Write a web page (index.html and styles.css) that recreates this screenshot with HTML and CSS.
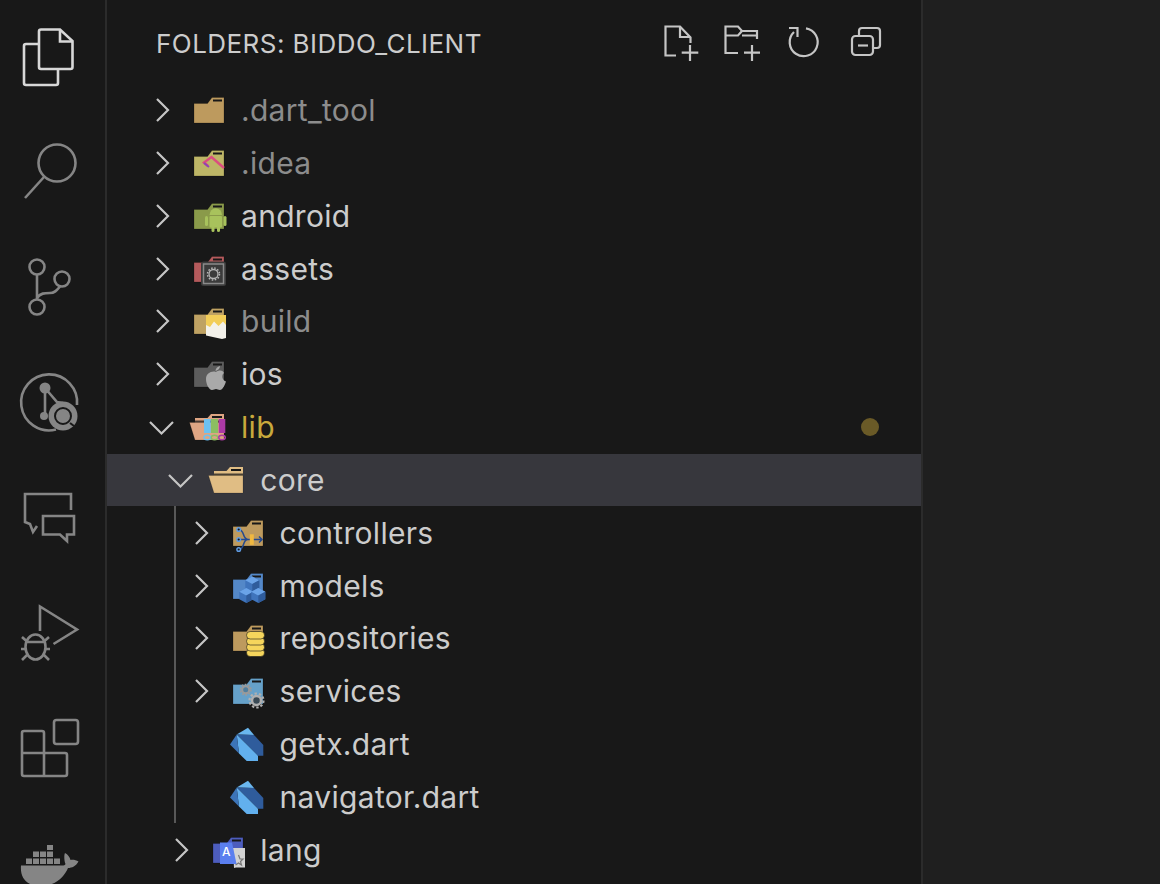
FILE: index.html
```html
<!DOCTYPE html>
<html lang="en">
<head>
    <meta charset="UTF-8">
    <title>Explorer - biddo_client</title>
    <link rel="stylesheet" href="styles.css">
</head>
<body>
    <svg class="icon-defs" aria-hidden="true">
        <defs>
            <g id="folder">
                <path d="M0 12.5H13.5L18 6.5H30V32H0Z" stroke="#000" stroke-opacity=".2"/>
                <rect x="19" y="8.5" width="9" height="2" fill="#181818"/>
            </g>
            <g id="folder-open">
                <path d="M1 10H13.5L17 6H30V32H1Z"/>
                <rect x="18" y="8" width="10" height="2" fill="#181818"/>
                <path d="M1 12.5H30V15H1Z" fill="#181818" opacity=".75"/>
                <path d="M-4.5 14.5H30V32H1Z" stroke="#000" stroke-opacity=".15"/>
            </g>
            <g id="chevron-right">
                <path d="M11 5L22 16L11 27" fill="none" stroke="#c5c5c5" stroke-width="2.2"/>
            </g>
            <g id="chevron-down">
                <path d="M4 11L15.5 22.5L27 11" fill="none" stroke="#c5c5c5" stroke-width="2.2"/>
            </g>
            <g id="dart">
                <path d="M3.7 9.4L15 2.7L21 10Z" fill="#6ab7ef"/>
                <path d="M3.7 9.4L21 10L30.3 20V30.7H25Z" fill="#2f5c9c"/>
                <path d="M3.7 9.4L25 30.7V36H13.7L6 28.4Z" fill="#62b0ee"/>
                <path d="M3.7 9.4L-3 19.4L6 28.4Z" fill="#3c74b8"/>
            </g>
            <g id="cube">
                <path d="M0-7.500L7-3.800V3.800L0 7.500L-7 3.800V-3.800Z" fill="#3f74bc"/>
                <path d="M0-7.500L7-3.800L0 0L-7-3.800Z" fill="#6aa3e8"/>
                <path d="M0 0L7-3.800V3.800L0 7.500Z" fill="#2f5c9c"/>
            </g>
            <linearGradient id="idea-stroke" x1="0" y1="1" x2="1" y2="0">
                <stop offset="0" stop-color="#fbe04a"/>
                <stop offset="1" stop-color="#ee7b3c"/>
            </linearGradient>
        </defs>
    </svg>

    <div class="workbench">
        <nav class="activity-bar">
            <svg class="activity-icon active" viewBox="0 0 105 115">
                <path d="M41 29.500H60L72.500 41V67A2 2 0 0 1 70.500 69H41A2 2 0 0 1 39 67V31.500A2 2 0 0 1 41 29.500Z"/>
                <path d="M60 30V41.500H72"/>
                <path d="M39 44H26A2 2 0 0 0 24 46V83A2 2 0 0 0 26 85H56A2 2 0 0 0 58 83V70"/>
            </svg>
            <svg class="activity-icon" viewBox="0 0 105 115">
                <circle cx="57" cy="48" r="18.500"/>
                <path d="M44 62L25 83"/>
            </svg>
            <svg class="activity-icon" viewBox="0 0 105 115">
                <circle cx="37" cy="37" r="7.500"/>
                <circle cx="62" cy="49" r="7.500"/>
                <circle cx="37" cy="77" r="7.500"/>
                <path d="M37 44.500V69.500"/>
                <path d="M37 68C40 63 45 63 50 63C55 63 57 60 60 56.500"/>
            </svg>
            <svg class="activity-icon" viewBox="0 0 105 115">
                <path d="M56 84.500A28 28 0 1 1 77 60"/>
                <circle cx="45" cy="43" r="5.500" class="solid"/>
                <circle cx="44" cy="71" r="4" class="solid"/>
                <path d="M45 43V71M45 43L57 57L63 58"/>
                <circle cx="63" cy="71" r="14.500" class="solid"/>
                <circle cx="63" cy="71" r="8" class="ring"/>
                <circle cx="63" cy="71" r="5" class="solid"/>
                <path d="M70 78L74 81" class="notch"/>
            </svg>
            <svg class="activity-icon" viewBox="0 0 105 115">
                <path d="M71 50V34H25V62L30 64L33 72L37 66"/>
                <path d="M43 56H74V74.500H67V81L60 74.500H43Z"/>
            </svg>
            <svg class="activity-icon" viewBox="0 0 105 115">
                <path d="M40 56V31.500L77 54.500L53.500 69"/>
                <ellipse cx="35.500" cy="72" rx="10" ry="12.500"/>
                <path d="M26 67H45M22 62L27 66.500M49 62L44 66.500M21 74H26M45 74H50M22 85L27 80M49 85L44 80"/>
            </svg>
            <svg class="activity-icon" viewBox="0 0 105 115">
                <rect x="54" y="30" width="24" height="24" rx="2.500"/>
                <path d="M44 86V43A2 2 0 0 0 42 41H24A2 2 0 0 0 22 43V84A2 2 0 0 0 24 86H65A2 2 0 0 0 67 84V65A2 2 0 0 0 65 63H22"/>
            </svg>
            <svg class="activity-icon" viewBox="0 0 105 115">
                <path class="solid" d="M47 40H53V45H47ZM33 46.500H39V52H33ZM40 46.500H46V52H40ZM47 46.500H53V52H47ZM26 53.500H32V59H26ZM33 53.500H39V59H33ZM40 53.500H46V59H40ZM47 53.500H53V59H47ZM54 53.500H60V59H54Z"/>
                <path class="solid" d="M21 60.500H62C64 60.500 65 60 65.500 59C64 55 64 50 65 48C67 49 70 52 70.500 55C73 54.500 76 55 78.500 56.500C76 61 72 63 68 63C64 72 56 81 40 81C26 81 20 72 21 60.500Z"/>
            </svg>
        </nav>

        <aside class="explorer">
            <header class="explorer-header">
                <h2 class="explorer-title">FOLDERS: BIDDO_CLIENT</h2>
                <div class="explorer-actions">
                    <svg class="action-icon" viewBox="0 0 40 40">
                        <path d="M16 33.500H5.500V4.500H20L30.500 15.500V21"/>
                        <path d="M20 4.500V15H30.500"/>
                        <path d="M21.700 30.700H38.300M30 23V39"/>
                    </svg>
                    <svg class="action-icon" viewBox="0 0 40 40">
                        <path d="M16 31H3.500V4.500H16L20 9H35V17"/>
                        <path d="M3.500 13.500H16L20 9M20 13.500H35"/>
                        <path d="M22 30.700H38M30 23V39"/>
                    </svg>
                    <svg class="action-icon" viewBox="0 0 40 40">
                        <path d="M10 10A14 14 0 1 0 22 6.300"/>
                        <path d="M5 6H13.500V15"/>
                    </svg>
                    <svg class="action-icon" viewBox="0 0 40 40">
                        <path d="M13 14V9A3 3 0 0 1 16 6H31A3 3 0 0 1 34 9V23A3 3 0 0 1 31 26H27"/>
                        <rect x="6" y="14" width="21" height="19" rx="3.500"/>
                        <path d="M12 23.500H22"/>
                    </svg>
                </div>
            </header>

            <ul class="tree">
                <li class="tree-row dim depth-0">
                    <svg class="twistie" viewBox="0 0 32 32"><use href="#chevron-right"/></svg>
                    <svg class="file-icon" viewBox="0 0 32 38"><use href="#folder" fill="#bd9a5e"/></svg>
                    <span class="label">.dart_tool</span>
                </li>
                <li class="tree-row dim depth-0">
                    <svg class="twistie" viewBox="0 0 32 32"><use href="#chevron-right"/></svg>
                    <svg class="file-icon" viewBox="0 0 32 38">
                        <use href="#folder" fill="#bdb566"/>
                        <path d="M14 22L10 18.500L17.500 13L30 24" fill="none" stroke="#db4d7f" stroke-width="2.500"/>
                        <path d="M30 24L15 34" fill="none" stroke="url(#idea-stroke)" stroke-width="3"/>
                        <path d="M10 19L15 23" stroke="#8d45b5" stroke-width="2"/>
                    </svg>
                    <span class="label">.idea</span>
                </li>
                <li class="tree-row depth-0">
                    <svg class="twistie" viewBox="0 0 32 32"><use href="#chevron-right"/></svg>
                    <svg class="file-icon" viewBox="0 0 32 38">
                        <use href="#folder" fill="#8a9a4a"/>
                        <g fill="#a8c25c">
                            <path d="M15.500 18A6 6.500 0 0 1 28 18Z"/>
                            <rect x="15.500" y="19" width="12.500" height="11.500" rx="1"/>
                            <rect x="11" y="19" width="3" height="10" rx="1.500"/>
                            <rect x="29.500" y="19" width="3" height="10" rx="1.500"/>
                            <rect x="17.500" y="29" width="3" height="6" rx="1.500"/>
                            <rect x="23" y="29" width="3" height="6" rx="1.500"/>
                        </g>
                    </svg>
                    <span class="label">android</span>
                </li>
                <li class="tree-row depth-0">
                    <svg class="twistie" viewBox="0 0 32 32"><use href="#chevron-right"/></svg>
                    <svg class="file-icon" viewBox="0 0 32 38">
                        <use href="#folder" fill="#b45a5c"/>
                        <rect x="7" y="11.500" width="25" height="24.500" rx="2.500" fill="#3b3b3b"/>
                        <rect x="9.500" y="14" width="20" height="19.500" fill="none" stroke="#8a8a8a" stroke-width="1.500"/>
                        <circle cx="19.500" cy="24" r="4.500" fill="none" stroke="#b5b5b5" stroke-width="1.300"/>
                        <circle cx="19.500" cy="24" r="6" fill="none" stroke="#b5b5b5" stroke-width="1.500" stroke-dasharray="1.600 1.540"/>
                    </svg>
                    <span class="label">assets</span>
                </li>
                <li class="tree-row dim depth-0">
                    <svg class="twistie" viewBox="0 0 32 32"><use href="#chevron-right"/></svg>
                    <svg class="file-icon" viewBox="0 0 32 38">
                        <use href="#folder" fill="#bfa263"/>
                        <path d="M12 13H32V36L28 37L12 33.500Z" fill="#f3f1ea"/>
                        <path d="M12 13H32V23L29 19.500L24.500 24L20 19.500L16 25L12 23Z" fill="#f2cd58"/>
                    </svg>
                    <span class="label">build</span>
                </li>
                <li class="tree-row depth-0">
                    <svg class="twistie" viewBox="0 0 32 32"><use href="#chevron-right"/></svg>
                    <svg class="file-icon" viewBox="0 0 32 38">
                        <use href="#folder" fill="#5c5c5c"/>
                        <path d="M22 17C24 15.500 27 15 29 16.500L30 18C27.500 19.500 27.500 25 32 26.500C31 30 28.500 35 26 35C24 35 23.500 34 22 34C20.500 34 20 35 18 35C15 35 12 29 12 24C12 18.500 17.500 15.500 22 17Z" fill="#a9a9a9"/>
                        <path d="M21.500 16C21.500 13.500 23.500 11.500 26 11C26 13.500 24 15.500 21.500 16Z" fill="#a9a9a9"/>
                    </svg>
                    <span class="label">ios</span>
                </li>
                <li class="tree-row modified depth-0">
                    <svg class="twistie" viewBox="0 0 32 32"><use href="#chevron-down"/></svg>
                    <svg class="file-icon" viewBox="0 0 32 38">
                        <use href="#folder-open" fill="#dea583"/>
                        <rect x="10" y="11" width="6.700" height="14" fill="#6cc1f2"/>
                        <rect x="17" y="11" width="7" height="14" fill="#8cbe62"/>
                        <rect x="24.700" y="11" width="6.600" height="14" fill="#ac3aa6"/>
                        <ellipse cx="13.300" cy="29.500" rx="3.300" ry="2.300" fill="none" stroke="#6cc1f2" stroke-width="1.500"/>
                        <ellipse cx="20.500" cy="29.500" rx="3.300" ry="2.300" fill="none" stroke="#8cbe62" stroke-width="1.500"/>
                        <ellipse cx="28" cy="29.500" rx="3.300" ry="2.300" fill="none" stroke="#ac3aa6" stroke-width="1.500"/>
                    </svg>
                    <span class="label">lib</span>
                    <span class="status-dot"></span>
                </li>
                <li class="tree-row selected depth-1">
                    <svg class="twistie" viewBox="0 0 32 32"><use href="#chevron-down"/></svg>
                    <svg class="file-icon" viewBox="0 0 32 38"><use href="#folder-open" fill="#e0bd84"/></svg>
                    <span class="label">core</span>
                </li>
                <li>
                    <ul class="tree-group">
                        <li class="tree-row depth-2">
                            <svg class="twistie" viewBox="0 0 32 32"><use href="#chevron-right"/></svg>
                            <svg class="file-icon" viewBox="0 0 32 38">
                                <use href="#folder" fill="#bd9a5e"/>
                                <path d="M5.700 15.500C12 15.500 9 25.500 15 25.500H28.500M5.700 25.500H15M5.700 35.500C12 35.500 9 25.500 15 25.500M26 22.500L29 25.500L26 28.500" fill="none" stroke="#24498f" stroke-width="1.500"/>
                                <rect x="16.800" y="20.300" width="4" height="10.500" fill="#f0b840"/>
                                <g fill="#181818" stroke="#5f9ae0" stroke-width="1.500">
                                    <circle cx="5.700" cy="15.500" r="1.800"/>
                                    <circle cx="5.700" cy="25.500" r="1.800"/>
                                    <circle cx="5.700" cy="35.500" r="1.800"/>
                                </g>
                            </svg>
                            <span class="label">controllers</span>
                        </li>
                        <li class="tree-row depth-2">
                            <svg class="twistie" viewBox="0 0 32 32"><use href="#chevron-right"/></svg>
                            <svg class="file-icon" viewBox="0 0 32 38">
                                <use href="#folder" fill="#5488c8"/>
                                <use href="#cube" x="19.300" y="17"/>
                                <use href="#cube" x="13.300" y="28.500"/>
                                <use href="#cube" x="25.300" y="28.500"/>
                            </svg>
                            <span class="label">models</span>
                        </li>
                        <li class="tree-row depth-2">
                            <svg class="twistie" viewBox="0 0 32 32"><use href="#chevron-right"/></svg>
                            <svg class="file-icon" viewBox="0 0 32 38">
                                <use href="#folder" fill="#bd9a5e"/>
                                <g fill="#f5d55c" stroke="#181818" stroke-width=".6">
                                    <rect x="13.500" y="30" width="18" height="7.500" rx="3.700"/>
                                    <rect x="13.500" y="24.500" width="18" height="7.500" rx="3.700"/>
                                    <rect x="13.500" y="18.500" width="18" height="7.500" rx="3.700"/>
                                    <rect x="13.500" y="12.500" width="18" height="7.500" rx="3.700"/>
                                </g>
                            </svg>
                            <span class="label">repositories</span>
                        </li>
                        <li class="tree-row depth-2">
                            <svg class="twistie" viewBox="0 0 32 32"><use href="#chevron-right"/></svg>
                            <svg class="file-icon" viewBox="0 0 32 38">
                                <use href="#folder" fill="#66a1c9"/>
                                <g fill="#4f7f9f" stroke="#9a9a9a">
                                    <circle cx="12.700" cy="17.700" r="3.500" stroke-width="2"/>
                                    <circle cx="12.700" cy="17.700" r="5.200" fill="none" stroke-width="1.600" stroke-dasharray="1.800 1.470"/>
                                </g>
                                <g fill="#3a4a55" stroke="#b0b0b0">
                                    <circle cx="23.500" cy="28.500" r="4.500" stroke-width="2.500"/>
                                    <circle cx="23.500" cy="28.500" r="7" fill="none" stroke-width="2.200" stroke-dasharray="2.400 2.000"/>
                                </g>
                            </svg>
                            <span class="label">services</span>
                        </li>
                        <li class="tree-row depth-2">
                            <span class="twistie"></span>
                            <svg class="file-icon" viewBox="0 0 32 38"><use href="#dart"/></svg>
                            <span class="label">getx.dart</span>
                        </li>
                        <li class="tree-row depth-2">
                            <span class="twistie"></span>
                            <svg class="file-icon" viewBox="0 0 32 38"><use href="#dart"/></svg>
                            <span class="label">navigator.dart</span>
                        </li>
                    </ul>
                </li>
                <li class="tree-row depth-1">
                    <svg class="twistie" viewBox="0 0 32 32"><use href="#chevron-right"/></svg>
                    <svg class="file-icon" viewBox="0 0 32 38">
                        <use href="#folder" fill="#4d5dbd"/>
                        <path d="M20 17L32 17V36.500H23L21 37Z" fill="#d3d3d3"/>
                        <path d="M25.500 24L27 28H30L27.500 30.500L28.500 34L25.500 32L22.500 34" fill="none" stroke="#777" stroke-width="1.200"/>
                        <path d="M7 11.500H19L23.500 33H7Z" fill="#5b7fef"/>
                        <text x="9" y="25" class="lang-letter">A</text>
                    </svg>
                    <span class="label">lang</span>
                </li>
            </ul>
        </aside>

        <main class="editor"></main>
    </div>
</body>
</html>
```

FILE: styles.css
```css
* {
    margin: 0;
    padding: 0;
    box-sizing: border-box;
}

html, body {
    height: 100%;
    overflow: hidden;
    background: #181818;
}

body {
    font-family: Inter, 'Noto Sans', sans-serif;
    color: #cccccc;
}

ul {
    list-style: none;
}

.icon-defs {
    display: none;
}

.workbench {
    display: flex;
    height: 884px;
    overflow: hidden;
}

/* activity bar */
.activity-bar {
    flex: 0 0 107px;
    display: flex;
    flex-direction: column;
    border-right: 2px solid #2b2b2b;
    background: #181818;
}

.activity-icon {
    flex: 0 0 115px;
    display: block;
    width: 105px;
    height: 115px;
    fill: none;
    stroke: #858585;
    stroke-width: 2.6;
}

.activity-icon.active {
    stroke: #d7d7d7;
}

.activity-icon .solid {
    fill: #858585;
    stroke: none;
}

.activity-icon .ring {
    fill: none;
    stroke: #181818;
    stroke-width: 2;
}

.activity-icon .notch {
    stroke: #181818;
    stroke-width: 2;
}

/* explorer */
.explorer {
    flex: 0 0 816px;
    border-right: 2px solid #2b2b2b;
    background: #181818;
}

.explorer-header {
    display: flex;
    align-items: center;
    height: 83.6px;
    padding: 0 35px 0 49px;
}

.explorer-title {
    flex: 1;
    padding-top: 3px;
    font-size: 26px;
    font-weight: 400;
    letter-spacing: 0.45px;
    color: #cccccc;
    white-space: nowrap;
}

.explorer-actions {
    display: flex;
    gap: 22px;
}

.action-icon {
    width: 40px;
    height: 40px;
    overflow: visible;
    fill: none;
    stroke: #c5c5c5;
    stroke-width: 2.2;
}

.tree-row {
    display: flex;
    align-items: center;
    height: 52.857px;
    font-size: 30px;
    letter-spacing: 0.3px;
    white-space: nowrap;
}

.depth-0 {
    padding-left: 39px;
}

.depth-1 {
    padding-left: 58.300px;
}

.depth-2 {
    padding-left: 77.600px;
}

.twistie {
    flex: 0 0 32px;
    width: 32px;
    height: 32px;
    margin-right: 16px;
    overflow: visible;
}

.file-icon {
    flex: 0 0 32px;
    width: 32px;
    height: 38px;
    margin-right: 15px;
    overflow: visible;
}

.lang-letter {
    font-family: Inter, sans-serif;
    font-size: 12px;
    font-weight: 500;
    letter-spacing: 0;
    fill: #ffffff;
}

.tree-row.dim .label {
    color: #8c8c8c;
}

.tree-row.modified .label {
    color: #c9a93c;
}

.tree-row.selected {
    background: #37373d;
}

.status-dot {
    width: 18px;
    height: 18px;
    margin: 0 42px 0 auto;
    border-radius: 50%;
    background: #6a5a27;
}

/* indent guide under core */
.tree-group {
    position: relative;
}

.tree-group::before {
    content: "";
    position: absolute;
    top: 0;
    bottom: 0;
    left: 67px;
    width: 2px;
    background: #585858;
}

.editor {
    flex: 1;
    background: #1f1f1f;
}
```
